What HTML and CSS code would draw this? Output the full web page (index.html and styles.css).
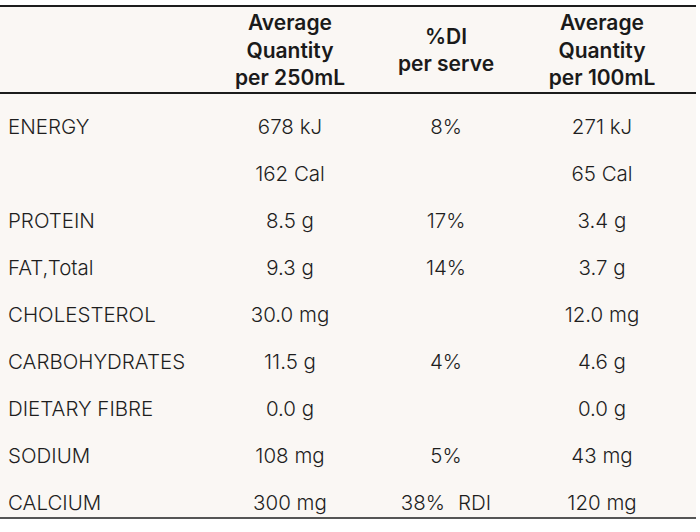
FILE: index.html
```html
<!DOCTYPE html>
<html>
<head>
<meta charset="utf-8">
<link rel="stylesheet" href="styles.css">
</head>
<body>
<table class="nutrition">
  <colgroup>
    <col class="c-name">
    <col class="c-val">
    <col class="c-val">
    <col class="c-last">
  </colgroup>
  <thead>
    <tr>
      <th></th>
      <th>Average<br>Quantity<br>per 250mL</th>
      <th>%DI<br>per serve</th>
      <th class="last">Average<br>Quantity<br>per 100mL</th>
    </tr>
  </thead>
  <tbody>
    <tr><td class="name">ENERGY</td><td>678 kJ</td><td>8%</td><td class="last">271 kJ</td></tr>
    <tr><td class="name"></td><td>162 Cal</td><td></td><td class="last">65 Cal</td></tr>
    <tr><td class="name">PROTEIN</td><td>8.5 g</td><td>17%</td><td class="last">3.4 g</td></tr>
    <tr><td class="name">FAT,Total</td><td>9.3 g</td><td>14%</td><td class="last">3.7 g</td></tr>
    <tr><td class="name">CHOLESTEROL</td><td>30.0 mg</td><td></td><td class="last">12.0 mg</td></tr>
    <tr><td class="name">CARBOHYDRATES</td><td>11.5 g</td><td>4%</td><td class="last">4.6 g</td></tr>
    <tr><td class="name">DIETARY FIBRE</td><td>0.0 g</td><td></td><td class="last">0.0 g</td></tr>
    <tr><td class="name">SODIUM</td><td>108 mg</td><td>5%</td><td class="last">43 mg</td></tr>
    <tr><td class="name">CALCIUM</td><td>300 mg</td><td><span class="rdi">38%<span class="gap"></span>RDI</span></td><td class="last">120 mg</td></tr>
  </tbody>
</table>
</body>
</html>
```
FILE: styles.css
```css
html, body {
  margin: 0;
  padding: 0;
  background: #ffffff;
}

body {
  padding-top: 5px;
  font-family: Inter, "Noto Sans CJK SC", sans-serif;
  color: #1e1e1e;
}

.nutrition {
  width: 696px;
  table-layout: fixed;
  border-collapse: collapse;
  background: #faf7f4;
  border-top: 2px solid #1c1c1c;
  border-bottom: 2px solid #555555;
}

.c-name { width: 212px; }
.c-val { width: 156px; }
.c-last { width: 172px; }

.nutrition th {
  font-size: 21px;
  font-weight: 600;
  line-height: 27.5px;
  color: #1a1a1a;
  text-align: center;
  vertical-align: middle;
  padding: 2px 0 0 0;
  height: 84px;
  box-sizing: border-box;
  border-bottom: 2px solid #1c1c1c;
}

.nutrition td {
  font-size: 20.5px;
  font-weight: 300;
  line-height: 26px;
  height: 47px;
  box-sizing: border-box;
  padding: 20px 0 1px 0;
  text-align: center;
  vertical-align: top;
  white-space: nowrap;
}

.nutrition td.name {
  text-align: left;
  padding-left: 8px;
}

.nutrition th.last,
.nutrition td.last {
  padding-right: 16px;
}

.gap {
  display: inline-block;
  width: 13px;
}
```
